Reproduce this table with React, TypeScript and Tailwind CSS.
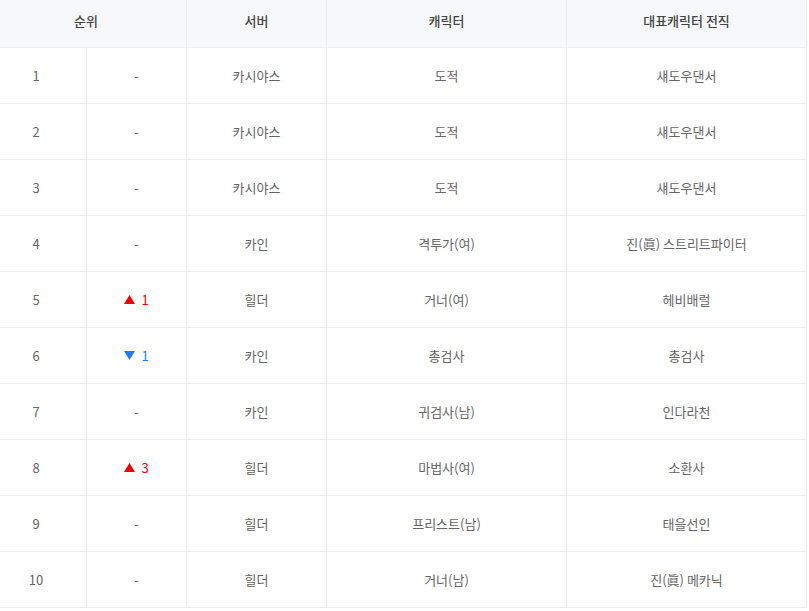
import React from "react";

type Row = { rank: number; change: number; server: string; char: string; job: string };

const rows: Row[] = [
  { rank: 1, change: 0, server: "카시야스", char: "도적", job: "섀도우댄서" },
  { rank: 2, change: 0, server: "카시야스", char: "도적", job: "섀도우댄서" },
  { rank: 3, change: 0, server: "카시야스", char: "도적", job: "섀도우댄서" },
  { rank: 4, change: 0, server: "카인", char: "격투가(여)", job: "진(眞) 스트리트파이터" },
  { rank: 5, change: 1, server: "힐더", char: "거너(여)", job: "헤비배럴" },
  { rank: 6, change: -1, server: "카인", char: "총검사", job: "총검사" },
  { rank: 7, change: 0, server: "카인", char: "귀검사(남)", job: "인다라천" },
  { rank: 8, change: 3, server: "힐더", char: "마법사(여)", job: "소환사" },
  { rank: 9, change: 0, server: "힐더", char: "프리스트(남)", job: "태을선인" },
  { rank: 10, change: 0, server: "힐더", char: "거너(남)", job: "진(眞) 메카닉" },
];

const cell = "flex items-center justify-center border-r border-b border-[#ebedf0]";
const head = "h-[48px] pb-[5px] bg-[#f7f8fa] text-[#444] font-medium";

function Change({ v }: { v: number }) {
  if (v === 0) return <span>-</span>;
  const up = v > 0;
  return (
    <span className={`flex items-center gap-[6px] ${up ? "text-[#f50000]" : "text-[#1f7cf5]"}`}>
      <svg width="11" height="9" viewBox="0 0 11 9">
        {up ? <polygon points="5.5,0 11,9 0,9" fill="#f50000" /> : <polygon points="0,0 11,0 5.5,9" fill="#1f7cf5" />}
      </svg>
      <span>{Math.abs(v)}</span>
    </span>
  );
}

export default function App() {
  return (
    <div
      className="w-[809px] h-[611px] bg-white text-[13px] text-[#666] overflow-hidden"
      style={{ fontFamily: '"Noto Sans CJK KR", "Noto Sans", sans-serif' }}
    >
      <div className="grid grid-cols-[101px_100px_140px_240px_240px] w-[821px] -ml-[14px]">
        <div className={`${cell} col-span-2 ${head}`}>순위</div>
        <div className={`${cell} ${head}`}>서버</div>
        <div className={`${cell} ${head}`}>캐릭터</div>
        <div className={`${cell} ${head}`}>대표캐릭터 전직</div>
        {rows.map((r) => (
          <React.Fragment key={r.rank}>
            <div className={`${cell} h-[56px]`}>{r.rank}</div>
            <div className={`${cell} h-[56px]`}>
              <Change v={r.change} />
            </div>
            <div className={`${cell} h-[56px]`}>{r.server}</div>
            <div className={`${cell} h-[56px]`}>{r.char}</div>
            <div className={`${cell} h-[56px]`}>{r.job}</div>
          </React.Fragment>
        ))}
      </div>
    </div>
  );
}
